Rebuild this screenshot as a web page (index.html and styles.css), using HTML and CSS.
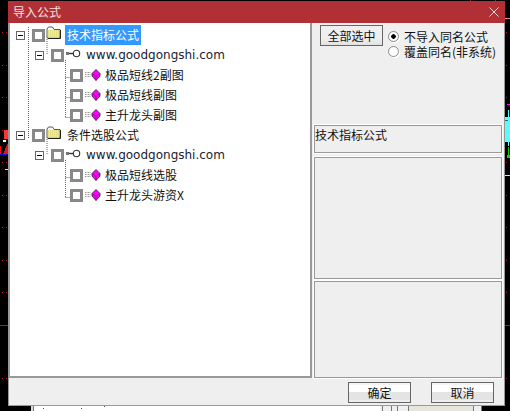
FILE: index.html
```html
<!DOCTYPE html>
<html lang="zh">
<head>
<meta charset="utf-8">
<title>导入公式</title>
<link rel="stylesheet" href="styles.css">
</head>
<body>
<svg class="defs" width="0" height="0" aria-hidden="true">
  <symbol id="folder" viewBox="0 0 15 13">
    <path d="M1 3V12H14V3.500H8L6.500 1H2.500L1 3Z" fill="#fff" stroke="#555"/>
    <rect x="2" y="4" width="11" height="7.500" fill="#f6f070"/>
    <path d="M2 5h11M2 7h11M2 9h11M2 11h11" stroke="#cfcf98" stroke-dasharray="1 1"/>
    <path d="M14.500 4V12.500H2" fill="none" stroke="#222"/>
  </symbol>
  <symbol id="key" viewBox="0 0 15 9">
    <circle cx="10.500" cy="4.500" r="3.200" fill="#fff" stroke="#333" stroke-width="1.100"/>
    <path d="M1 4.500H7.500" stroke="#333" stroke-width="1.400"/>
    <rect x="0" y="3" width="3" height="3" fill="#777"/>
  </symbol>
  <symbol id="gem" viewBox="0 0 16 12">
    <path d="M0 3.500h6M0 5.500h6M0 7.500h6" stroke="#999" stroke-dasharray="1 0.500"/>
    <path d="M11 0.500L15 4.500V7L11 11.500L7 7V4.500Z" fill="#f0f" stroke="#222" stroke-width="0.800"/>
    <path d="M7 4.500L11 7L15 4.500M11 7V11.500" fill="none" stroke="#701070" stroke-width="0.600"/>
  </symbol>
</svg>

<svg class="backdrop" width="510" height="411" shape-rendering="crispEdges" aria-hidden="true">
  <g fill="#b01818">
    <rect x="2" y="32" width="1" height="1"/><rect x="6" y="32" width="1" height="1"/>
    <rect x="2" y="65" width="1" height="1"/><rect x="6" y="65" width="1" height="1"/>
    <rect x="2" y="97" width="1" height="1"/><rect x="6" y="97" width="1" height="1"/>
    <rect x="2" y="130" width="1" height="1"/>
    <rect x="2" y="162" width="1" height="1"/><rect x="6" y="162" width="1" height="1"/>
    <rect x="2" y="195" width="1" height="1"/><rect x="6" y="195" width="1" height="1"/>
    <rect x="2" y="227" width="1" height="1"/><rect x="6" y="227" width="1" height="1"/>
    <rect x="2" y="260" width="1" height="1"/><rect x="6" y="260" width="1" height="1"/>
    <rect x="2" y="292" width="1" height="1"/><rect x="6" y="292" width="1" height="1"/>
    <rect x="2" y="378" width="1" height="1"/><rect x="6" y="378" width="1" height="1"/>
    <rect x="0" y="325" width="8" height="1"/>
    <rect x="506" y="32" width="1" height="1"/><rect x="506" y="65" width="1" height="1"/>
    <rect x="506" y="97" width="1" height="1"/><rect x="506" y="162" width="1" height="1"/>
    <rect x="506" y="195" width="1" height="1"/><rect x="506" y="227" width="1" height="1"/>
    <rect x="506" y="260" width="1" height="1"/><rect x="506" y="292" width="1" height="1"/>
    <rect x="506" y="378" width="1" height="1"/>
    <rect x="505" y="325" width="5" height="1"/>
    <rect x="470" y="0" width="1" height="1"/><rect x="495" y="0" width="1" height="1"/>
  </g>
  <rect x="505" y="18" width="5" height="1" fill="#f08080"/>
  <rect x="507" y="104" width="3" height="1" fill="#f0f"/>
  <rect x="508" y="110" width="1" height="36" fill="#5ff"/>
  <rect x="505" y="117" width="5" height="25" fill="#5ff"/>
  <path d="M505 120h3v1h-3z" fill="#287070"/>
  <path d="M508 147h1v8h1v3h-3v-3h1z" fill="#10d010"/>
  <rect x="505" y="175" width="5" height="1" fill="#ff0"/>
  <rect x="4" y="130" width="4" height="9" fill="#f83838"/>
  <path d="M8 143V154H3Z" fill="#f01010"/>
  <rect x="3" y="140" width="3" height="2" fill="#fff"/>
  <rect x="0" y="146" width="1" height="8" fill="#f01010"/>
  <rect x="0" y="154" width="8" height="1" fill="#1010e0"/>
  <rect x="5" y="169" width="3" height="1" fill="#ff0"/>
  <rect x="31" y="406" width="3" height="5" fill="#ddd"/>
  <rect x="34" y="406" width="349" height="5" fill="#fff"/>
  <rect x="33" y="406" width="1" height="5" fill="#777"/>
  <g fill="#555"><rect x="43" y="408" width="1" height="1"/><rect x="81" y="408" width="1" height="1"/><rect x="104" y="406" width="1" height="1"/></g>
  <rect x="380" y="406" width="102" height="5" fill="#f0f0f0"/>
  <rect x="408" y="406" width="66" height="5" fill="#e6e6dc"/>
  <g fill="#777"><rect x="382" y="406" width="1" height="5"/><rect x="391" y="406" width="1" height="5"/><rect x="397" y="406" width="1" height="5"/><rect x="408" y="406" width="1" height="5"/><rect x="473" y="406" width="1" height="5"/><rect x="481" y="406" width="1" height="5"/></g>
</svg>

<main class="dialog">
  <header class="titlebar">
    <span class="title">导入公式</span>
    <svg class="close" viewBox="0 0 10 10" aria-label="关闭"><path d="M0.500 0.500L9.500 9.500M9.500 0.500L0.500 9.500" stroke="#f0d8d8" fill="none"/></svg>
  </header>
  <div class="body">
    <section class="tree">
      <svg class="lines" width="300" height="200" aria-hidden="true">
        <path d="M20.500 4V116M39 16V31M39 116V131M57.500 37V94M57.500 137V174M25 13H31M44 34H50M57.500 54.500H67M57.500 74.500H67M57.500 94.500H67M25 113H31M44 134H50M57.500 154.500H67M57.500 174.500H67" stroke="#666" stroke-dasharray="1 1" fill="none"/>
      </svg>
      <div class="row">
        <span class="exp"></span><span class="check"></span>
        <svg class="folder"><use href="#folder"/></svg>
        <span class="label selected">技术指标公式</span>
      </div>
      <div class="row level1">
        <span class="exp"></span><span class="check"></span>
        <svg class="key"><use href="#key"/></svg>
        <span class="label url">www.goodgongshi.com</span>
      </div>
      <div class="row level2">
        <span class="check"></span><svg class="gem"><use href="#gem"/></svg>
        <span class="label">极品短线2副图</span>
      </div>
      <div class="row level2">
        <span class="check"></span><svg class="gem"><use href="#gem"/></svg>
        <span class="label">极品短线副图</span>
      </div>
      <div class="row level2">
        <span class="check"></span><svg class="gem"><use href="#gem"/></svg>
        <span class="label">主升龙头副图</span>
      </div>
      <div class="row">
        <span class="exp"></span><span class="check"></span>
        <svg class="folder"><use href="#folder"/></svg>
        <span class="label plain">条件选股公式</span>
      </div>
      <div class="row level1">
        <span class="exp"></span><span class="check"></span>
        <svg class="key"><use href="#key"/></svg>
        <span class="label url">www.goodgongshi.com</span>
      </div>
      <div class="row level2">
        <span class="check"></span><svg class="gem"><use href="#gem"/></svg>
        <span class="label">极品短线选股</span>
      </div>
      <div class="row level2">
        <span class="check"></span><svg class="gem"><use href="#gem"/></svg>
        <span class="label">主升龙头游资X</span>
      </div>
    </section>
    <aside class="side">
      <div class="options">
        <button class="btn select-all">全部选中</button>
        <div class="radios">
          <div class="radio-row"><span class="radio on"></span><span>不导入同名公式</span></div>
          <div class="radio-row"><span class="radio"></span><span>覆盖同名(非系统)</span></div>
        </div>
      </div>
      <div class="panel name">技术指标公式</div>
      <div class="panel info"></div>
      <div class="panel extra"></div>
    </aside>
  </div>
  <footer class="footer">
    <button class="btn">确定</button>
    <button class="btn">取消</button>
  </footer>
</main>
</body>
</html>
```
FILE: styles.css
```css
* { box-sizing: border-box; }
html, body { margin: 0; height: 100%; }
body {
  position: relative;
  width: 510px;
  height: 411px;
  overflow: hidden;
  background: #000;
  padding: 1px 5px 5px 8px;
  font: 12px/14px "Noto Sans CJK SC", "Noto Sans", sans-serif;
  color: #111;
}
.defs { position: absolute; }
.backdrop { position: absolute; left: 0; top: 0; }

.dialog {
  position: relative;
  width: 497px;
  height: 405px;
  display: flex;
  flex-direction: column;
  background: #efefef;
  border: 1px solid #999;
  border-top: 0;
}
.titlebar {
  height: 22px;
  margin: 0 -1px;
  flex: none;
  display: flex;
  align-items: center;
  justify-content: space-between;
  padding: 0 6px 0 5px;
  background: #b03035;
  color: #f2e0e0;
}
.title { font-size: 12px; }
.close { width: 10px; height: 10px; }
.body { flex: 1; display: flex; min-height: 0; }
.tree {
  position: relative;
  width: 304px;
  flex: none;
  margin-left: -1px;
  background: #fff;
  border: 2px solid #999;
  border-top: 0;
}
.lines { position: absolute; left: -2px; top: 0; }
.row {
  position: relative;
  height: 20px;
  display: flex;
  align-items: center;
  padding-left: 22px;
}
.row:first-of-type { margin-top: 2px; }
.level1 { padding-left: 41px; }
.level2 { padding-left: 60px; }
.exp {
  width: 9px;
  height: 9px;
  margin-left: -16px;
  margin-right: 7px;
  border: 1px solid #666;
  background: linear-gradient(#000, #000) center / 5px 1px no-repeat #fff;
}
.check {
  width: 13px;
  height: 13px;
  flex: none;
  border: 3px solid #888;
  background: #fff;
  position: relative;
}
.folder { width: 15px; height: 13px; margin: -6px 0 0 1px; flex: none; position: relative; }
.key { width: 15px; height: 9px; margin: -3px 0 0 2px; flex: none; position: relative; }
.gem { width: 16px; height: 12px; margin: -1px 0 0 2px; flex: none; position: relative; }
.label { position: relative; white-space: nowrap; line-height: 20px; height: 20px; margin-left: 4px; }
.row .label.selected { background: #3399ff; color: #fff; padding: 0 2px; margin-left: 4px; }
.row .label.plain { margin-left: 6px; }
.url { font-family: "DejaVu Sans", sans-serif; font-size: 12px; margin-left: 5px; color: #1a2230; }

.side { flex: 1; display: flex; flex-direction: column; min-width: 0; padding: 0 2px 0 2px; }
.options { height: 102px; flex: none; display: flex; align-items: flex-start; padding: 2px 0 0 6px; }
.btn {
  width: 63px;
  height: 21px;
  padding: 0;
  font: inherit;
  color: #111;
  border: 1px solid #666;
  background: linear-gradient(#f4f4f4 0 10%, #fff 10% 50%, #e4e4e4 50% 90%, #eee 90%);
}
.select-all { background: linear-gradient(#f0f0f0 0 60%, #e2e2e2); }
.radios { margin: 4px 0 0 5px; }
.radio-row { display: flex; align-items: center; height: 15px; gap: 5px; white-space: nowrap; line-height: 15px; }
.radio {
  width: 11px;
  height: 11px;
  flex: none;
  border-radius: 50%;
  border: 1px solid #8a8a8a;
  box-shadow: 1px 1px 0 #fff;
  background: #fff;
}
.radio.on { background: radial-gradient(circle, #000 0 2px, #fff 2.500px); }
.panel { border: 1px solid #999; outline: 1px solid #fff; }
.name { height: 28px; padding-top: 2px; }
.info { height: 122px; margin-top: 4px; }
.extra { height: 97px; margin-top: 2px; }
.footer {
  height: 27px;
  flex: none;
  display: flex;
  justify-content: flex-end;
  gap: 20px;
  padding: 4px 10px 0 0;
}
```
